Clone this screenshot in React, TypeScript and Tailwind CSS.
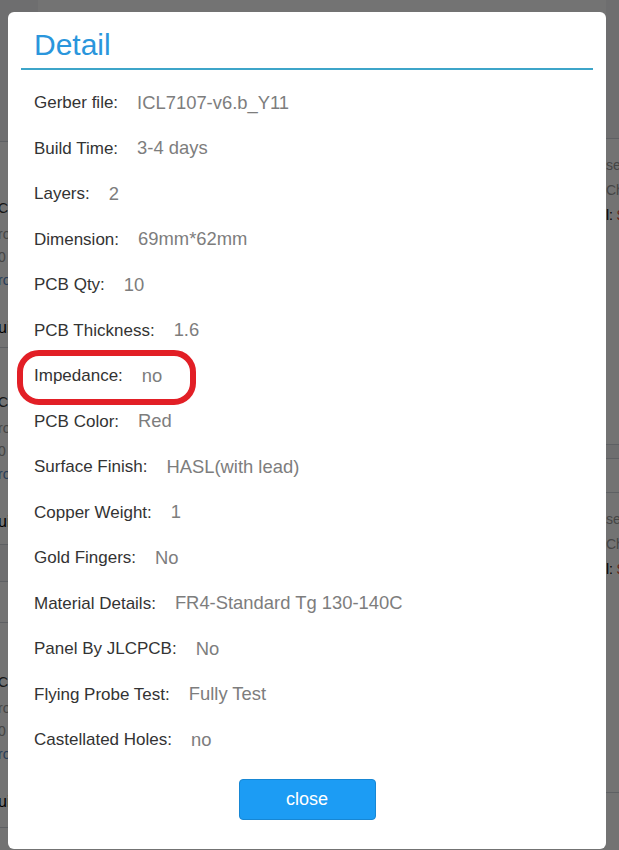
import React from 'react'

const rows: [string, string][] = [
  ['Gerber file:', 'ICL7107-v6.b_Y11'],
  ['Build Time:', '3-4 days'],
  ['Layers:', '2'],
  ['Dimension:', '69mm*62mm'],
  ['PCB Qty:', '10'],
  ['PCB Thickness:', '1.6'],
  ['Impedance:', 'no'],
  ['PCB Color:', 'Red'],
  ['Surface Finish:', 'HASL(with lead)'],
  ['Copper Weight:', '1'],
  ['Gold Fingers:', 'No'],
  ['Material Details:', 'FR4-Standard Tg 130-140C'],
  ['Panel By JLCPCB:', 'No'],
  ['Flying Probe Test:', 'Fully Test'],
  ['Castellated Holes:', 'no'],
]

// page behind the overlay, only its edges show
function LeftCard({ h, top }: { h: number; top: number }) {
  return (
    <div className="flex flex-col border-b border-gray-300 text-[14px] whitespace-nowrap" style={{ height: h }}>
      <div style={{ height: top }} />
      <div className="h-[28px] leading-[28px] text-[#333]">Cc</div>
      <div className="h-[24px] leading-[24px] text-[#999]">ro</div>
      <div className="h-[22px] leading-[22px] text-[#999]">0</div>
      <div className="h-[24px] leading-[24px] text-[#5a8ac6]">ro</div>
      <div className="mt-[22px] h-[28px] leading-[28px] text-[16px] text-black">ui</div>
    </div>
  )
}

function RightCard({ h }: { h: number }) {
  return (
    <div className="flex flex-col border-b border-gray-300 text-[14px] whitespace-nowrap" style={{ height: h }}>
      <div className="mt-[14px] h-[25px] leading-[25px] text-[#999]">se</div>
      <div className="h-[25px] leading-[25px] text-[#999]">Cha</div>
      <div className="h-[25px] leading-[25px] text-black">
        l: <span className="text-[#e0452b]">$</span>
      </div>
    </div>
  )
}

function Background() {
  return (
    <div className="flex justify-between font-['Liberation_Sans',Arial,sans-serif]">
      <div className="-ml-[2px] w-[40px]">
        <div className="h-[142px] border-b border-gray-300 bg-gray-100" />
        <LeftCard h={206} top={52} />
        <LeftCard h={197} top={40} />
        <div className="h-[37px] border-b border-gray-300 bg-gray-100" />
        <div className="h-[41px] border-b border-gray-300" />
        <LeftCard h={205} top={45} />
      </div>
      <div className="w-[13px]">
        <div className="h-[139px] border-b border-gray-300 bg-gray-100" />
        <RightCard h={306} />
        <div className="h-[14px] border-b border-gray-300 bg-gray-100" />
        <div className="h-[34px] border-b border-gray-300" />
        <RightCard h={300} />
      </div>
    </div>
  )
}

export default function App() {
  return (
    <div className="relative h-[850px] w-[619px] overflow-hidden bg-white">
      <Background />
      <div className="absolute inset-0 bg-black/[0.55]" />

      <div className="absolute left-[8px] top-[12px] w-[598px] rounded-[6px] bg-white px-[13px] pb-[29px] font-['Liberation_Sans',Arial,sans-serif]">
        <div className="border-b-2 border-[#3da5c9] pb-[7px] pl-[13px] pt-[16px]">
          <h1 className="text-[30px] leading-[33px] text-[#2a96dc]">Detail</h1>
        </div>

        <div className="mt-[10px] flex flex-col">
          {rows.map(([label, value]) => (
            <div key={label} className="relative flex h-[45.5px] items-center pl-[13px]">
              <span className="text-[17px] text-[#333]">{label}</span>
              <span className="ml-[19px] text-[18.4px] text-[#7d7d7d]">{value}</span>
              {label === 'Impedance:' ? (
                <div className="absolute left-[-4px] top-[-3px] h-[55px] w-[179px] rounded-[22px] border-[6px] border-[#e21f26]" />
              ) : null}
            </div>
          ))}
        </div>

        <div className="mt-[16px] flex justify-center">
          <button className="h-[41px] w-[137px] rounded-[4px] border border-[#1787d4] bg-[#1c9cf4] text-[18px] text-white">
            close
          </button>
        </div>
      </div>
    </div>
  )
}
